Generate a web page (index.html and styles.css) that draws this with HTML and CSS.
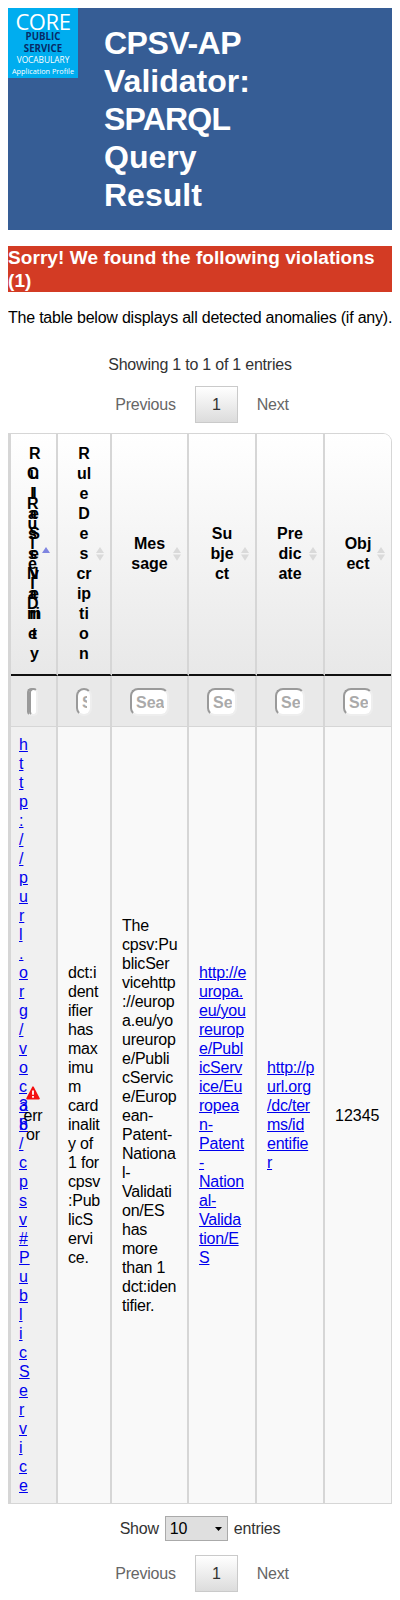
FILE: index.html
```html
<!DOCTYPE html>
<html lang="en">
<head>
<meta charset="utf-8">
<title>CPSV-AP Validator: SPARQL Query Result</title>
<link rel="stylesheet" href="styles.css">
</head>
<body>
<header class="banner">
  <div class="logo">
    <span class="core">CORE</span>
    <span class="public">PUBLIC</span>
    <span class="service">SERVICE</span>
    <span class="vocabulary">VOCABULARY</span>
    <span class="profile">Application Profile</span>
  </div>
  <h1><span class="prefix">CPSV-AP</span> Validator: <span class="caps">SPARQL</span> Query Result</h1>
</header>
<h3 class="violations">Sorry! We found the following violations (1)</h3>
<p class="intro">The table below displays all detected anomalies (if any).</p>
<div class="info">Showing 1 to 1 of 1 entries</div>
<nav class="pager"><a class="prev">Previous</a><a class="current">1</a><a class="next">Next</a></nav>

<main class="results">
  <div class="row head">
    <div class="cell first stack">
      <span class="name rule-name">Class Name</span>
      <span class="name rule-name">Rule ID</span>
      <span class="name severity">Rule Severity</span>
      <svg class="sort" viewBox="0 0 9 16"><path d="M0 7L4.5 0L9 7Z" fill="#7f85e0"/></svg>
    </div>
    <div class="cell"><span class="name">R<br>ul<br>e<br>D<br>e<br>s<br>cr<br>ip<br>ti<br>o<br>n</span><svg class="sort" viewBox="0 0 9 16"><path d="M0 7L4.5 0L9 7ZM0 8.5H9L4.5 15.5Z" fill="#dadada"/></svg></div>
    <div class="cell"><span class="name">Mes<br>sage</span><svg class="sort" viewBox="0 0 9 16"><path d="M0 7L4.5 0L9 7ZM0 8.5H9L4.5 15.5Z" fill="#dadada"/></svg></div>
    <div class="cell"><span class="name">Su<br>bje<br>ct</span><svg class="sort" viewBox="0 0 9 16"><path d="M0 7L4.5 0L9 7ZM0 8.5H9L4.5 15.5Z" fill="#dadada"/></svg></div>
    <div class="cell"><span class="name">Pre<br>dic<br>ate</span><svg class="sort" viewBox="0 0 9 16"><path d="M0 7L4.5 0L9 7ZM0 8.5H9L4.5 15.5Z" fill="#dadada"/></svg></div>
    <div class="cell"><span class="name">Obj<br>ect</span><svg class="sort" viewBox="0 0 9 16"><path d="M0 7L4.5 0L9 7ZM0 8.5H9L4.5 15.5Z" fill="#dadada"/></svg></div>
  </div>
  <div class="row filters">
    <div class="cell first stack"><input><input class="shifted"></div>
    <div class="cell"><input placeholder="Search"></div>
    <div class="cell"><input placeholder="Search"></div>
    <div class="cell"><input placeholder="Search"></div>
    <div class="cell"><input placeholder="Search"></div>
    <div class="cell"><input placeholder="Search"></div>
  </div>
  <div class="row body">
    <div class="cell first stack">
      <a class="narrow" href="#">http://purl.org/vocab/cpsv#PublicService</a>
      <a class="narrow" href="#">38</a>
      <div class="error">
        <svg viewBox="0 0 14 14"><path d="M7 1.2L13 12.6H1Z" fill="#f31010" stroke="#f31010" stroke-width="1.6" stroke-linejoin="round"/><path d="M7 4.4V8.8M7 10V11.8" stroke="#fff" stroke-width="1.8"/></svg>
        <span>err<br>or</span>
      </div>
    </div>
    <div class="cell"><span>dct:i<br>dent<br>ifier<br>has<br>max<br>imu<br>m<br>card<br>inalit<br>y of<br>1 for<br>cpsv<br>:Pub<br>licS<br>ervi<br>ce.</span></div>
    <div class="cell"><span>The<br>cpsv:Pu<br>blicSer<br>vicehttp<br>://europ<br>a.eu/yo<br>ureurop<br>e/Publi<br>cServic<br>e/Europ<br>ean-<br>Patent-<br>Nationa<br>l-<br>Validati<br>on/ES<br>has<br>more<br>than 1<br>dct:iden<br>tifier.</span></div>
    <div class="cell"><a href="#">http://e<br>uropa.<br>eu/you<br>reurop<br>e/Publ<br>icServ<br>ice/Eu<br>ropea<br>n-<br>Patent<br>-<br>Nation<br>al-<br>Valida<br>tion/E<br>S</a></div>
    <div class="cell"><a href="#">http://p<br>url.org<br>/dc/ter<br>ms/id<br>entifie<br>r</a></div>
    <div class="cell number"><span>12345</span></div>
  </div>
</main>

<div class="length">Show <span class="select">10<svg viewBox="0 0 7 4"><path d="M0 0H7L3.5 4Z"/></svg></span> entries</div>
<nav class="pager"><a class="prev">Previous</a><a class="current">1</a><a class="next">Next</a></nav>
</body>
</html>
```
FILE: styles.css
```css
* { box-sizing: border-box; }
body { margin: 8px; background: #fff; font: 16px/19px "Liberation Sans", Arial, sans-serif; letter-spacing: -0.22px; color: #000; }
.banner { display: flex; height: 222px; background: #365d95; color: #fff; }
.logo { width: 70px; height: 70px; padding-top: 3px; background: #00adef; display: flex; flex-direction: column; align-items: center; font-family: "Open Sans", sans-serif; letter-spacing: 0; white-space: nowrap; }
.core { font-size: 22px; line-height: 21px; letter-spacing: -0.4px; }
.public { font-size: 9.7px; line-height: 10px; font-weight: 700; color: #072b67; }
.service { font-size: 9.7px; line-height: 14px; font-weight: 700; color: #072b67; }
.vocabulary { font-size: 8.3px; line-height: 7px; }
.profile { font-size: 7.3px; line-height: 16px; }
h1 { width: 190px; margin: 16px 0 0 26px; font-size: 32px; line-height: 38px; letter-spacing: 0; }
.prefix { letter-spacing: -0.5px; }
.caps { letter-spacing: -0.8px; }
.violations { margin: 16px 0; background: #d33b24; color: #fff; font-size: 19px; line-height: 23px; letter-spacing: 0.07px; }
.intro { margin: 0; white-space: nowrap; }
.info { margin-top: 28px; text-align: center; color: #333; }
.pager { display: flex; justify-content: center; gap: 2px; height: 37px; margin-top: 12px; padding-left: 4px; color: #666; }
.pager a { padding: 8px 16px; border: 1px solid transparent; }
.pager .current { color: #333; width: 43px; padding: 8px 0; text-align: center; border-color: #cacaca; background: linear-gradient(#fff, #dcdcdc); }
.results { margin-top: 10px; border: 1px solid #d6d6d6; border-left-width: 3px; border-radius: 0 9px 0 0; overflow: hidden; }
.row { display: grid; grid-template-columns: 47px 54px 77px 68px 68px 66px; }
.cell { display: flex; align-items: center; border-right: 2px solid #d6d6d6; white-space: nowrap; }
.cell:last-child { border-right: 0; }
.cell > * { min-width: 0; }
.stack { display: grid; white-space: normal; overflow-wrap: anywhere; }
.stack > * { grid-area: 1 / 1; }
.head { height: 242px; font-weight: 700; line-height: 20px; letter-spacing: 0; }
.head .cell { border-bottom: 2px solid #111; background: linear-gradient(#fff, #e8e8e8); padding: 0 6px 0 18px; text-align: center; }
.name { flex: 1; word-break: break-all; }
.sort { width: 8px; height: 16px; margin-left: 4px; flex: none; }
.head .first { padding: 0; }
.first .name { width: 11px; margin-left: 16px; }
.first .severity { margin-left: 18px; }
.first .sort { margin-left: 31px; }
.filters { height: 51px; border-bottom: 1px solid #d6d6d6; background: #e9e9e9; }
.filters .cell { padding: 1px 18px 0; }
input { width: 100%; height: 28px; padding: 2px 3px 0 4px; border: 2px solid #9a9a9a; border-right-color: #eee; border-bottom-color: #eee; border-radius: 8px; background: #fff; font: 700 16px "Liberation Sans", Arial, sans-serif; }
input::placeholder { color: #aaa; opacity: 1; }
.filters .first { padding: 1px 0 0 16px; }
.filters .first input { width: 9px; padding: 0; }
.filters .first .shifted { margin-left: 2px; }
.body { height: 776px; background: #f9f9f9; }
.body .cell { padding: 0 10px; }
.body .number { letter-spacing: 0; }
.body .first { padding: 0; background: #f0f0f0; }
.narrow { width: 1px; margin-left: 8px; overflow-wrap: anywhere; letter-spacing: 0; }
.error { width: 20px; margin-left: 12px; display: grid; justify-items: center; text-align: center; }
.error svg { width: 14px; height: 14px; margin: -1px 0 6px; }
.body a { color: #0000ee; }
.length { display: flex; justify-content: center; align-items: center; gap: 6px; margin-top: 12px; color: #333; }
.select { width: 63px; height: 25px; display: flex; align-items: center; justify-content: space-between; padding: 0 5px 0 4px; border: 1px solid #aaa; background: #dfdfdf; color: #000; }
.select svg { width: 7px; height: 4px; }
.length + .pager { margin-top: 14px; }
```
